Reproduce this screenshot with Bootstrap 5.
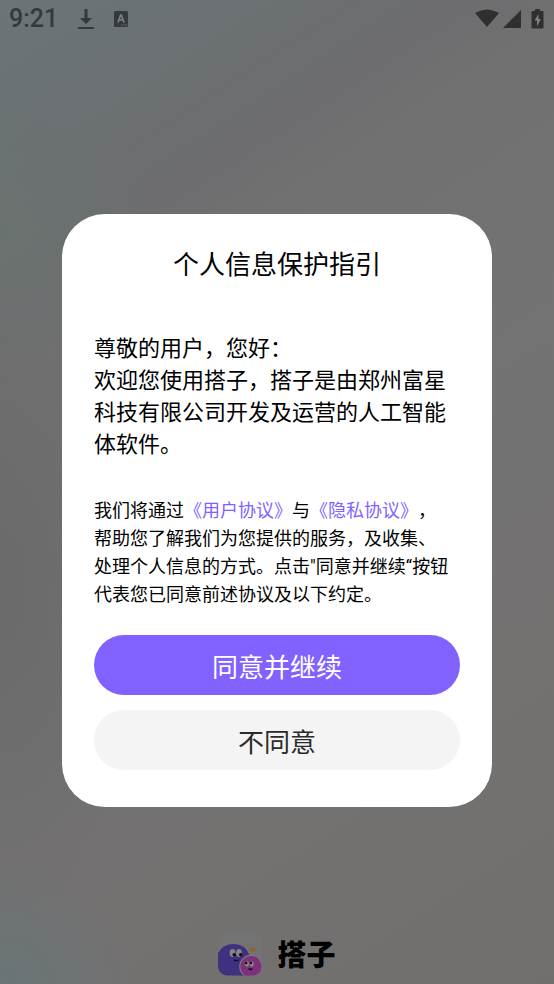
<!DOCTYPE html>
<html lang="zh-CN">
<head>
<meta charset="utf-8">
<meta name="viewport" content="width=device-width, initial-scale=1">
<title>搭子 - 个人信息保护指引</title>
<link href="https://cdn.jsdelivr.net/npm/bootstrap@5.3.0/dist/css/bootstrap.min.css" rel="stylesheet">
<style>
  body {
    font-family: Roboto, "Noto Sans CJK SC", sans-serif;
    text-spacing-trim: space-all;
    color: #000;
    background:
      radial-gradient(ellipse 28% 14% at 0% 24%, #6a726f 0%, rgba(106,114,111,0) 100%),
      radial-gradient(ellipse 24% 12% at 0% 100%, #697577 0%, rgba(105,117,119,0) 100%),
      radial-gradient(ellipse 30% 36% at 0% 60%, #6b6a6a 0%, rgba(107,106,106,0) 100%),
      linear-gradient(147deg, #6b7476 0%, #6b7073 14%, #6d6d70 22%, #717171 29%, #737373 50%, #747171 75%, #716f6e 100%);
  }
  .status-bar { height: 37px; padding: 0 9px; color: #36393b; }
  .clock { font-size: 25px; line-height: 37px; font-weight: 500; }
  .tray { gap: 20px; }
  .stage { padding: 52px 62px 0; }
  .consent { border-radius: 43px; padding: 31px 32px 37px; }
  .consent-title { font-size: 26px; line-height: 40px; font-weight: 400; margin-bottom: 48px; }
  .greeting { font-size: 22px; line-height: 32px; margin-bottom: 36px; }
  .terms { font-size: 18px; line-height: 28px; margin-bottom: 26px; }
  .terms a { color: #8162ff; }
  .choices { gap: 15px; }
  .choice { height: 60px; padding: 12px 12px 6px; font-size: 26px; line-height: 40px; }
  .choice-yes, .choice-yes:hover { background: #8162ff; color: #fff; }
  .choice-no, .choice-no:hover { background: #f4f4f4; color: #2b2b2b; }
  .brand { height: 52px; gap: 15px; }
  .brand-name { font-size: 29px; line-height: 48px; font-weight: 900; }
</style>
<script src="https://cdn.jsdelivr.net/npm/bootstrap@5.3.0/dist/js/bootstrap.bundle.min.js"></script>
</head>
<body class="min-vh-100 d-flex flex-column">
  <header class="status-bar d-flex align-items-center justify-content-between">
    <div class="tray d-flex align-items-center">
      <span class="clock">9:21</span>
      <svg width="16" height="22" viewBox="0 0 16 22" fill="currentColor" aria-hidden="true"><path d="M6.500 1h3v9H14l-6 6-6-6h4.500zM0 19h16v2H0z"/></svg>
      <svg width="14" height="16" viewBox="0 0 14 16" aria-hidden="true"><rect width="14" height="16" rx="1.500" fill="currentColor"/><path d="M4 11.500 6.600 4h.8L10 11.500M5 9h4" fill="none" stroke="#7b8082" stroke-width="1.600"/><path d="M7.500 14h1.200m.9 0h1.200m.9 0h1.200" stroke="#7b8082"/></svg>
    </div>
    <div class="d-flex align-items-center">
      <svg width="24" height="20" viewBox="0 0 24 20" fill="#2f2f2f" aria-hidden="true"><path d="M0 4Q12-3 24 4L12 18z"/></svg>
      <svg class="ms-1" width="18" height="20" viewBox="0 0 18 20" fill="#2f2f2f" aria-hidden="true"><path d="M0 19 18 1v18z"/></svg>
      <svg class="ms-2" width="16" height="20" viewBox="0 0 16 20" aria-hidden="true"><path d="M6 0h5v2h2.500q1 0 1 1v15.500q0 1-1 1h-10q-1 0-1-1V3q0-1 1-1H6z" fill="#2f2f2f"/><path d="M9.500 5 5.500 11.500H8v6L11.800 10H9.500z" fill="#828282"/></svg>
    </div>
  </header>

  <main class="stage flex-grow-1 d-flex flex-column justify-content-center">
    <section class="consent bg-white" role="dialog" aria-labelledby="consentTitle">
      <h1 class="consent-title text-center" id="consentTitle">个人信息保护指引</h1>
      <p class="greeting">尊敬的用户，您好：<br>欢迎您使用搭子，搭子是由郑州富星科技有限公司开发及运营的人工智能体软件。</p>
      <p class="terms">我们将通过<a class="text-decoration-none" href="#user">《用户协议》</a>与<a class="text-decoration-none" href="#privacy">《隐私协议》</a>，<br>帮助您了解我们为您提供的服务，及收集、<br>处理个人信息的方式。点击"同意并继续“按钮<br>代表您已同意前述协议及以下约定。</p>
      <div class="choices d-flex flex-column">
        <button type="button" class="choice choice-yes btn border-0 rounded-pill">同意并继续</button>
        <button type="button" class="choice choice-no btn border-0 rounded-pill">不同意</button>
      </div>
    </section>
  </main>

  <footer class="brand d-flex justify-content-center align-items-start">
    <svg width="44" height="44" viewBox="0 0 44 44" aria-hidden="true">
      <defs><clipPath id="tile"><rect width="44" height="43.500" rx="9"/></clipPath></defs>
      <g clip-path="url(#tile)">
        <rect width="44" height="44" fill="#757575" fill-opacity=".7"/>
        <path d="M0 21Q5 12 16 12q11 0 15.500 11 2 5 1.500 21H0z" fill="#403080"/>
        <circle cx="33" cy="34.500" r="11.800" fill="#7d777c"/>
        <circle cx="33" cy="34.500" r="10.600" fill="#7e307c"/>
      </g>
      <g fill="#858585"><ellipse cx="14.500" cy="21" rx="2.900" ry="3.900"/><ellipse cx="21" cy="21" rx="2.900" ry="3.900"/><ellipse cx="29" cy="32" rx="2" ry="2.800"/><ellipse cx="33.700" cy="32" rx="2" ry="2.800"/></g>
      <g fill="#0c0c14"><circle cx="16.200" cy="22.800" r="1.700"/><circle cx="22.700" cy="22.800" r="1.700"/><circle cx="28.200" cy="31" r="1.200"/><circle cx="33" cy="31" r="1.200"/></g>
      <path d="M15.800 27.800q2.500 2 5 0M30.500 36.500q2 2 4 0" fill="none" stroke="#0c0c14" stroke-width="1.200"/>
      <path d="m34.500 14 1.100 2 2.600-.2-1.600 2 .7 2.300-2.200-.9-2.200 1.300.2-2.400-1.800-1.500 2.400-.5z" fill="#8f6234"/>
    </svg>
    <span class="brand-name">搭子</span>
  </footer>
</body>
</html>
